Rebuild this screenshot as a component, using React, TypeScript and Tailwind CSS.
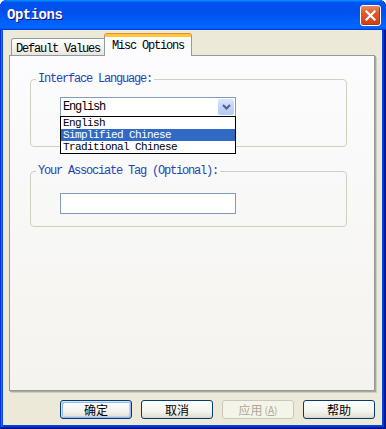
import React from "react";

const mono = "font-['Liberation_Mono',monospace] text-[12px] tracking-[-1.2px]";

function XPButton({
  children,
  def,
  disabled,
}: {
  children: React.ReactNode;
  def?: boolean;
  disabled?: boolean;
}) {
  const base =
    "w-[72px] h-[19px] rounded-[3px] border flex items-center justify-center font-['Noto_Sans_CJK_SC',sans-serif] text-[12px] leading-none";
  if (disabled)
    return (
      <div className={`${base} border-[#c9c7ba] bg-[#f5f4ea] text-[#aca899]`}>
        {children}
      </div>
    );
  return (
    <div
      className={`${base} border-[#003c74] text-black bg-[linear-gradient(180deg,#ffffff,#f3f3ef_60%,#e5e3d9_90%,#d6d0c5)] ${
        def
          ? "shadow-[inset_-1px_-1px_#98b8ea,inset_1px_1px_#cee7ff,inset_-2px_-2px_#bcd4f6,inset_2px_2px_#98b8ea]"
          : ""
      }`}
    >
      {children}
    </div>
  );
}

export default function App() {
  return (
    <div className="w-[386px] h-[429px] flex flex-col rounded-t-[7px] overflow-hidden bg-[#0842d8] shadow-[inset_-1px_-1px_#00138c,inset_1px_1px_#0831d9,inset_-2px_-2px_#001ea0,inset_2px_2px_#166aee,inset_-3px_-3px_#003bda,inset_3px_3px_#0855dd]">
      {/* Title bar */}
      <div className="h-[30px] shrink-0 flex items-center justify-between pl-[7px] pr-[5px] bg-[linear-gradient(180deg,#0997ff,#0053ee_8%,#0050ee_40%,#0066ff_88%,#0066ff_93%,#005bff_95%,#003dd7_96%,#003dd7)]">
        <span className="font-['Liberation_Mono',monospace] font-bold text-[14px] tracking-[-0.5px] text-white [text-shadow:1px_1px_#0f1089]">
          Options
        </span>
        <div className="w-[21px] h-[21px] rounded-[3px] border border-white bg-[linear-gradient(180deg,#e98a63,#e25a2c_35%,#d6471b_80%,#c8401a)] shadow-[inset_-1px_-1px_#b23812] flex items-center justify-center">
          <svg width="13" height="13" viewBox="0 0 13 13">
            <path d="M2.5 2.5 L10.5 10.5 M10.5 2.5 L2.5 10.5" stroke="#fff" strokeWidth="2.2" strokeLinecap="square" />
          </svg>
        </div>
      </div>

      {/* Body */}
      <div className="flex-1 ml-[3px] mr-[4px] mb-[4px] bg-[#ece9d8] flex flex-col">
        <div className="ml-[6px] mt-[5px] w-[366px]">
          {/* Tabs */}
          <div className={`flex items-end h-[20px] pl-[2px] ${mono}`}>
            <div className="w-[95px] h-[17px] border border-b-0 border-[#919b9c] rounded-t-[3px] bg-[linear-gradient(180deg,#ffffff,#f2f2ee_60%,#e6e5de)] pl-[4px] pt-[4px] leading-[12px] text-black">
              Default Values
            </div>
            <div className="relative z-10 -ml-[2px] -mb-px w-[88px] h-[22px] border-x border-[#919b9c] border-t-[3px] border-t-[#ffc83c] rounded-t-[3px] shadow-[0_-1px_0_#e68b2c] bg-[#fcfcfe] pl-[7px] pt-[3px] leading-[12px] text-black">
              Misc Options
            </div>
          </div>

          {/* Panel */}
          <div className={`h-[336px] border border-[#919b9c] bg-[linear-gradient(180deg,#fcfcfe,#f4f3ee)] shadow-[1px_1px_0_#aca899,2px_2px_0_#d0cdbf] pl-[20px] pt-[17px] ${mono}`}>
            <fieldset className="relative w-[317px] h-[74px] border border-[#d0d0bf] rounded-[4px]">
              <legend className="ml-[5px] px-[2px] leading-[12px] text-[#1e44b6]">
                Interface Language:
              </legend>
              <div className="relative ml-[29px] mt-[12px] w-[176px] h-[20px] border border-[#7f9db9] bg-white flex">
                <span className="flex-1 pl-[2px] pt-[3px] leading-[12px] text-black">English</span>
                <div className="w-[16px] m-[1px] rounded-[2px] bg-[linear-gradient(180deg,#dbe6fd,#c3d3fb_50%,#b7c9f7)] flex items-center justify-center">
                  <svg width="9" height="6" viewBox="0 0 9 6">
                    <path d="M1 1 L4.5 4.5 L8 1" stroke="#4d6185" strokeWidth="2" fill="none" />
                  </svg>
                </div>
                <div className="absolute z-20 top-full -left-px w-[176px] border border-black bg-white text-[11px] tracking-[-0.6px]">
                  <div className="h-[12px] leading-[12px] pl-[2px] text-black">English</div>
                  <div className="h-[12px] leading-[12px] pl-[2px] bg-[#316ac5] text-white">Simplified Chinese</div>
                  <div className="h-[12px] leading-[12px] pl-[2px] text-black">Traditional Chinese</div>
                </div>
              </div>
            </fieldset>

            <fieldset className="mt-[18px] w-[317px] h-[62px] border border-[#d0d0bf] rounded-[4px]">
              <legend className="ml-[5px] px-[2px] leading-[12px] text-[#1e44b6]">
                Your Associate Tag (Optional):
              </legend>
              <div className="ml-[29px] mt-[16px] w-[176px] h-[21px] border border-[#7f9db9] bg-white" />
            </fieldset>
          </div>
        </div>

        {/* Buttons */}
        <div className="mt-[9px] pl-[57px] flex gap-[9px]">
          <XPButton def>确定</XPButton>
          <XPButton>取消</XPButton>
          <XPButton disabled>
            应用<span className="text-[10px] ml-[2px]">(<u>A</u>)</span>
          </XPButton>
          <XPButton>帮助</XPButton>
        </div>
      </div>
    </div>
  );
}
